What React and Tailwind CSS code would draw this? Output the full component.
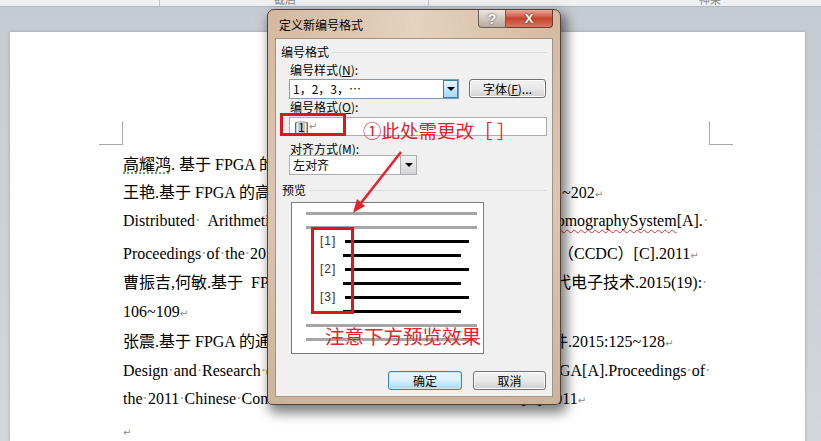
const D = () => <span className="text-[#a0a0a0]">·</span>
const R = () => (
  <span className="font-['DejaVu_Sans',sans-serif] text-[10px] text-[#8c8c8c]">↵</span>
)

const lines = [
  {
    h: 'h-[28px]',
    w: 'w-[434px]',
    left: (
      <>
        <span className="underline decoration-dotted decoration-[#3a9a3a] underline-offset-[3px]">高耀鸿</span>. 基于 FPGA 的高速数据采集系统设计[J].电子测量技术.2013
      </>
    ),
    right: null,
  },
  {
    h: 'h-[28px]',
    w: 'w-[431px]',
    left: <>王艳.基于 FPGA 的高速数据传输接口设计[J].电子设计工程.2014:20</>,
    right: (
      <>
        1~202<R />
      </>
    ),
  },
  {
    h: 'h-[33px]',
    w: 'w-[425px]',
    left: (
      <>
        Distributed<D />&nbsp; Arithmetic<D /> Based<D /> Electrical<D /> Capacitance<D />
      </>
    ),
    right: (
      <>
        <span className="underline decoration-wavy decoration-[#e03030] decoration-1 underline-offset-[3px]">TomographySystem</span>[A].<D />
      </>
    ),
  },
  {
    h: 'h-[29px]',
    w: 'w-[435px]',
    left: (
      <>
        Proceedings<D />of<D />the<D />2011<D />Chinese<D />Control<D />and<D />Decision<D />Conference
      </>
    ),
    right: (
      <>
        （CCDC）[C].2011<R />
      </>
    ),
  },
  {
    h: 'h-[29px]',
    w: 'w-[432px]',
    left: <>曹振吉,何敏.基于&nbsp;&nbsp;FPGA&nbsp;的多通道数据采集系统设计[J].现</>,
    right: (
      <>
        代电子技术.2015(19):<D />
      </>
    ),
  },
  {
    h: 'h-[30px]',
    w: 'w-[434px]',
    left: (
      <>
        106~109<R />
      </>
    ),
    right: null,
  },
  {
    h: 'h-[29px]',
    w: 'w-[429px]',
    left: <>张震.基于 FPGA 的通用数据采集系统设计与实现[J].电子元器</>,
    right: (
      <>
        件.2015:125~128<R />
      </>
    ),
  },
  {
    h: 'h-[28px]',
    w: 'w-[436px]',
    left: (
      <>
        Design<D />and<D />Research<D />of<D />Data<D />Acquisition<D />Based<D />on<D />FP
      </>
    ),
    right: (
      <>
        GA[A].Proceedings<D />of<D />
      </>
    ),
  },
  {
    h: 'h-[32px]',
    w: 'w-[398px]',
    left: (
      <>
        the<D />2011<D />Chinese<D />Control<D />and<D />Decision<D />Conference
      </>
    ),
    right: (
      <>
        [C].2011<R />
      </>
    ),
  },
  {
    h: 'h-[28px]',
    w: 'w-[434px]',
    left: <R />,
    right: null,
  },
]

function Arrow() {
  return <span className="h-0 w-0 border-x-[4px] border-t-[4px] border-x-transparent border-t-black" />
}

function WinButton({ children, className = '', primary = false }) {
  return (
    <div
      className={`flex items-center justify-center rounded-[3px] border text-[12px] leading-none ${
        primary
          ? 'border-[#3c7fb1] bg-gradient-to-b from-[#eaf6fd] via-[#d9f0fc] to-[#a7d9f5] shadow-[inset_0_0_0_1px_#c4ecfd]'
          : 'border-[#707070] bg-gradient-to-b from-[#f2f2f2] via-[#e8e8e8] to-[#cfcfcf] shadow-[inset_0_0_0_1px_#fcfcfc]'
      } ${className}`}
    >
      {children}
    </div>
  )
}

function PreviewRow({ kind, label }) {
  if (kind === 'gray')
    return (
      <div className="flex h-[14px] items-center pl-[14px]">
        <div className="h-[3px] w-[171px] bg-[#a6a6a6]" />
      </div>
    )
  if (kind === 'long')
    return (
      <div className="flex h-[14px] items-center pl-[28px]">
        <span className="w-[25px] font-['Liberation_Sans',sans-serif] text-[12px] leading-none tracking-[1px] text-[#333]">
          {label}
        </span>
        <div className="h-[3px] w-[124px] bg-black" />
      </div>
    )
  return (
    <div className="flex h-[14px] items-center pl-[51px]">
      <div className="h-[3px] w-[118px] bg-black" />
    </div>
  )
}

function Dialog() {
  return (
    <div className="absolute left-[267px] top-[9px] flex h-[396px] w-[294px] flex-col rounded-t-[7px] rounded-b-[5px] border border-[#4f4236] bg-gradient-to-b from-[#d4b99f] via-[#dcc6b1] to-[#cdb399] px-[7px] pb-[7px] shadow-[4px_6px_12px_2px_rgba(0,0,0,0.5)]">
      {/* title bar */}
      <div className="flex h-[28px] items-start justify-between bg-gradient-to-r from-transparent via-[#ecdccc]/70 to-transparent">
        <span className="mt-[8px] pl-[4px] text-[12px] leading-[14px] text-black">定义新编号格式</span>
        <div className="flex">
          <div className="flex h-[18px] w-[28px] items-center justify-center rounded-bl-[4px] border border-t-0 border-[#6b6158] bg-gradient-to-b from-[#ece6df] to-[#b7aa9d] font-['Liberation_Sans',sans-serif] text-[14px] font-bold leading-none text-white [text-shadow:0_0_2px_#333]">
            ?
          </div>
          <div className="flex h-[18px] w-[47px] items-center justify-center rounded-br-[4px] border border-l-0 border-t-0 border-[#6b3a30] bg-gradient-to-b from-[#e9a898] via-[#c8432f] to-[#d87660] font-['Liberation_Sans',sans-serif] text-[13px] font-bold leading-none text-white [text-shadow:0_0_2px_#5a1a10]">
            X
          </div>
        </div>
      </div>

      {/* client area */}
      <div className="flex flex-1 flex-col border border-[#a0948a] bg-[#f0f0f0] text-[12px] text-black">
        <div className="mt-[6px] flex h-[14px] items-center pl-[5px] pr-[5px] leading-[14px]">
          <span>编号格式</span>
          <div className="ml-[3px] h-px flex-1 bg-[#d8dde2]" />
        </div>
        <div className="mt-[4px] h-[14px] pl-[14px] leading-[14px]">
          编号样式(<span className="underline">N</span>):
        </div>
        <div className="mt-[2px] flex h-[20px] items-start pl-[13px]">
          <div className="flex h-[20px] w-[170px] border border-[#7f9db9] bg-white">
            <span className="flex-1 pl-[3px] leading-[18px]">1，2，3，…</span>
            <div className="flex w-[15px] items-center justify-center border border-[#3c7fb1] bg-gradient-to-b from-[#eaf6fd] to-[#a7d9f5]">
              <Arrow />
            </div>
          </div>
          <WinButton className="ml-[10px] h-[19px] w-[77px]">字体(<span className="underline">F</span>)...</WinButton>
        </div>
        <div className="mt-[1px] h-[14px] pl-[14px] leading-[14px]">
          编号格式(<span className="underline">O</span>):
        </div>
        <div className="mt-[3px] pl-[13px]">
          <div className="flex h-[19px] w-[258px] items-center border border-[#abadb3] bg-white pl-[4px] leading-none">
            [<span className="bg-[#c8c8c8]">1</span>]<R />
          </div>
        </div>
        <div className="mt-[6px] h-[13px] pl-[14px] leading-[13px]">
          对齐方式(<span className="underline">M</span>):
        </div>
        <div className="pl-[13px]">
          <div className="flex h-[20px] w-[128px] border border-[#abadb3] bg-white">
            <span className="flex-1 pl-[3px] leading-[18px]">左对齐</span>
            <div className="flex w-[16px] items-center justify-center border-l border-[#abadb3] bg-gradient-to-b from-[#f2f2f2] to-[#d5d5d5]">
              <Arrow />
            </div>
          </div>
        </div>
        <div className="mt-[8px] flex h-[14px] items-center pl-[6px] pr-[5px] leading-[14px]">
          <span>预览</span>
          <div className="ml-[3px] h-px flex-1 bg-[#d8dde2]" />
        </div>
        <div className="ml-[15px] mt-[5px] h-[152px] w-[193px] border border-[#7a7a7a] bg-white pt-[3px]">
          <PreviewRow kind="gray" />
          <PreviewRow kind="gray" />
          <PreviewRow kind="long" label="[1]" />
          <PreviewRow kind="short" />
          <PreviewRow kind="long" label="[2]" />
          <PreviewRow kind="short" />
          <PreviewRow kind="long" label="[3]" />
          <PreviewRow kind="short" />
          <PreviewRow kind="gray" />
          <PreviewRow kind="gray" />
        </div>
        <div className="mt-[17px] flex justify-end gap-[11px] pr-[6px]">
          <WinButton primary className="h-[19px] w-[74px]">确定</WinButton>
          <WinButton className="h-[19px] w-[73px]">取消</WinButton>
        </div>
      </div>
    </div>
  )
}

export default function App() {
  return (
    <div className="relative h-[441px] w-[821px] overflow-hidden bg-gradient-to-b from-[#c6cbd2] to-[#d3d7dc] font-['Noto_Sans_CJK_SC',sans-serif]">
      {/* ruler strip */}
      <div className="flex h-[7px] overflow-hidden border-b border-[#b2b7bf] bg-[#eef0f3] text-[11px] leading-none text-[#8a8a8a]">
        <div className="w-[160px] border-r border-[#c2c6cc]" />
        <div className="w-[269px] border-r border-[#c2c6cc] pl-[114px]">
          <span className="-mt-[6px] block">截后</span>
        </div>
        <div className="pl-[270px]">
          <span className="-mt-[6px] block">神采</span>
        </div>
      </div>

      {/* document page */}
      <div className="ml-[10px] mt-[25px] h-[420px] w-[795px] bg-white pt-[89px] shadow-[0_0_3px_rgba(0,0,0,0.25)]">
        <div className="flex">
          <div className="ml-[89px] h-[24px] w-[24px] border-b border-r border-[#a8a8a8]" />
          <div className="w-[586px]" />
          <div className="h-[24px] w-[24px] border-b border-l border-[#a8a8a8]" />
        </div>
        <div className="ml-[113px] mt-[6px] font-['Liberation_Serif','Noto_Sans_CJK_SC',serif] text-[16px] text-black">
          {lines.map((l, i) => (
            <div key={i} className={`flex whitespace-nowrap leading-[28px] ${l.h}`}>
              <span className={`shrink-0 overflow-hidden ${l.w}`}>{l.left}</span>
              {l.right && <span>{l.right}</span>}
            </div>
          ))}
        </div>
      </div>

      <Dialog />

      {/* annotations */}
      <div className="absolute left-[280px] top-[113px] h-[23px] w-[66px] border-[3px] border-[#e1131c]" />
      <div className="absolute left-[363px] top-[119px] text-[18.5px] leading-[22px] text-[#e4232e]">①此处需更改［ ］</div>
      <svg className="absolute left-[345px] top-[148px]" width="62" height="70" viewBox="0 0 62 70">
        <line x1="56" y1="4" x2="16" y2="55" stroke="#e4232e" strokeWidth="2.6" />
        <polygon points="8,65 20,58 12,51" fill="#e4232e" />
      </svg>
      <div className="absolute left-[311px] top-[227px] h-[87px] w-[43px] border-[3px] border-[#e1131c]" />
      <div className="absolute left-[325px] top-[325px] text-[19.5px] leading-[22px] text-[#e4232e]">注意下方预览效果</div>
    </div>
  )
}
